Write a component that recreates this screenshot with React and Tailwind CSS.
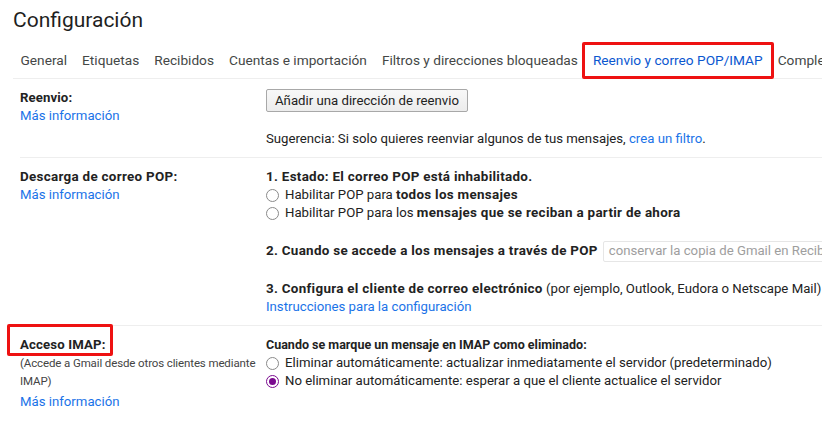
import React from "react";

const font = { fontFamily: "Roboto, 'Liberation Sans', Arial, sans-serif" };

function Radio({ checked }) {
  return checked ? (
    <span className="w-[13px] h-[13px] rounded-full border border-[#7b0a8f] flex items-center justify-center shrink-0">
      <span className="w-[7px] h-[7px] rounded-full bg-[#7b0a8f]" />
    </span>
  ) : (
    <span className="w-[13px] h-[13px] rounded-full border border-[#8a8a8a] bg-white shrink-0" />
  );
}

function RadioRow({ checked, children }) {
  return (
    <div className="flex items-center gap-[6px] h-[18px] whitespace-nowrap">
      <Radio checked={checked} />
      <span>{children}</span>
    </div>
  );
}

const tabs = [
  "General",
  "Etiquetas",
  "Recibidos",
  "Cuentas e importación",
  "Filtros y direcciones bloqueadas",
  "Reenvio y correo POP/IMAP",
  "Complementos",
];

const B = "font-bold text-[13.4px] tracking-[0.3px]";

export default function App() {
  return (
    <div className="w-[835px] h-[428px] bg-white overflow-hidden" style={font}>
      <div className="w-[822px] overflow-hidden">
        <div className="pl-[13px] pt-[6px] text-[21px] leading-[28px] text-[#1f1f1f]">
          Configuración
        </div>
        <div className="mt-[9px] ml-[13px] flex border-b border-[#eeeeee] whitespace-nowrap text-[13.7px] text-[#444746]">
          {tabs.map((t) =>
            t === "Reenvio y correo POP/IMAP" ? (
              <div key={t} className="relative h-[35px] px-[7.5px] flex items-center text-[#0b57d0]">
                <div className="absolute top-[-1px] bottom-[-1px] left-[-3.5px] right-[-3.5px] border-[3px] border-[#ee1111] rounded-[2px] pointer-events-none" />
                {t}
              </div>
            ) : (
              <div key={t} className="h-[35px] px-[7.5px] flex items-center">
                {t}
              </div>
            )
          )}
        </div>

        <div className="text-[13.2px] leading-[18px] text-[#222222]">
          {/* Reenvio */}
          <div className="ml-[20px] grid grid-cols-[246px_1fr] pt-[10px] pb-[9px] border-b border-[#eeeeee]">
            <div>
              <div className="font-bold tracking-[0.1px]">Reenvio:</div>
              <div className="text-[#1a73e8]">Más información</div>
            </div>
            <div>
              <button className="h-[23px] px-[8px] border border-[#a8a8a8] rounded-[2px] bg-gradient-to-b from-[#f8f8f8] to-[#ececec] text-[13.2px] text-[#222222]">
                Añadir una dirección de reenvio
              </button>
              <div className="mt-[18px]">
                Sugerencia: Si solo quieres reenviar algunos de tus mensajes,{" "}
                <span className="text-[#1a73e8]">crea un filtro</span>.
              </div>
            </div>
          </div>

          {/* POP */}
          <div className="ml-[20px] grid grid-cols-[246px_1fr] pt-[10px] pb-[9px] border-b border-[#eeeeee]">
            <div>
              <div className={B}>Descarga de correo POP:</div>
              <div className="text-[#1a73e8]">Más información</div>
            </div>
            <div>
              <div className={B}>1. Estado: El correo POP está inhabilitado.</div>
              <RadioRow>
                Habilitar POP para <b className={B}>todos los mensajes</b>
              </RadioRow>
              <RadioRow>
                Habilitar POP para los <b className={B}>mensajes que se reciban a partir de ahora</b>
              </RadioRow>
              <div className="mt-[19px] flex items-center h-[20px] whitespace-nowrap">
                <span className={B}>2. Cuando se accede a los mensajes a través de POP</span>
                <div className="ml-[5px] h-[21px] w-[300px] shrink-0 border border-[#e6e6e6] rounded-[2px] px-[5px] flex items-center text-[#9e9e9e]">
                  conservar la copia de Gmail en Recibidos
                </div>
              </div>
              <div className="mt-[19px] whitespace-nowrap">
                <span className={B}>3. Configura el cliente de correo electrónico</span>{" "}
                (por ejemplo, Outlook, Eudora o Netscape Mail)
              </div>
              <div className="text-[#1a73e8]">Instrucciones para la configuración</div>
            </div>
          </div>

          {/* IMAP */}
          <div className="ml-[20px] grid grid-cols-[246px_1fr] pt-[10px]">
            <div>
              <div className="font-bold tracking-[0.15px] relative inline-block">
                Acceso IMAP:
                <div className="absolute left-[-13px] right-[-7px] top-[-12px] bottom-[-2px] border-[3px] border-[#ee1111] rounded-[2px]" />
              </div>
              <div className="text-[11.5px] tracking-[-0.12px] leading-[18px] text-[#444444] whitespace-nowrap">
                (Accede a Gmail desde otros clientes mediante
                <br />
                IMAP)
              </div>
              <div className="mt-[3px] text-[#1a73e8]">Más información</div>
            </div>
            <div>
              <div className="font-bold text-[12.5px]">Cuando se marque un mensaje en IMAP como eliminado:</div>
              <RadioRow>
                Eliminar automáticamente: actualizar inmediatamente el servidor (predeterminado)
              </RadioRow>
              <RadioRow checked>
                No eliminar automáticamente: esperar a que el cliente actualice el servidor
              </RadioRow>
            </div>
          </div>
        </div>
      </div>
    </div>
  );
}
